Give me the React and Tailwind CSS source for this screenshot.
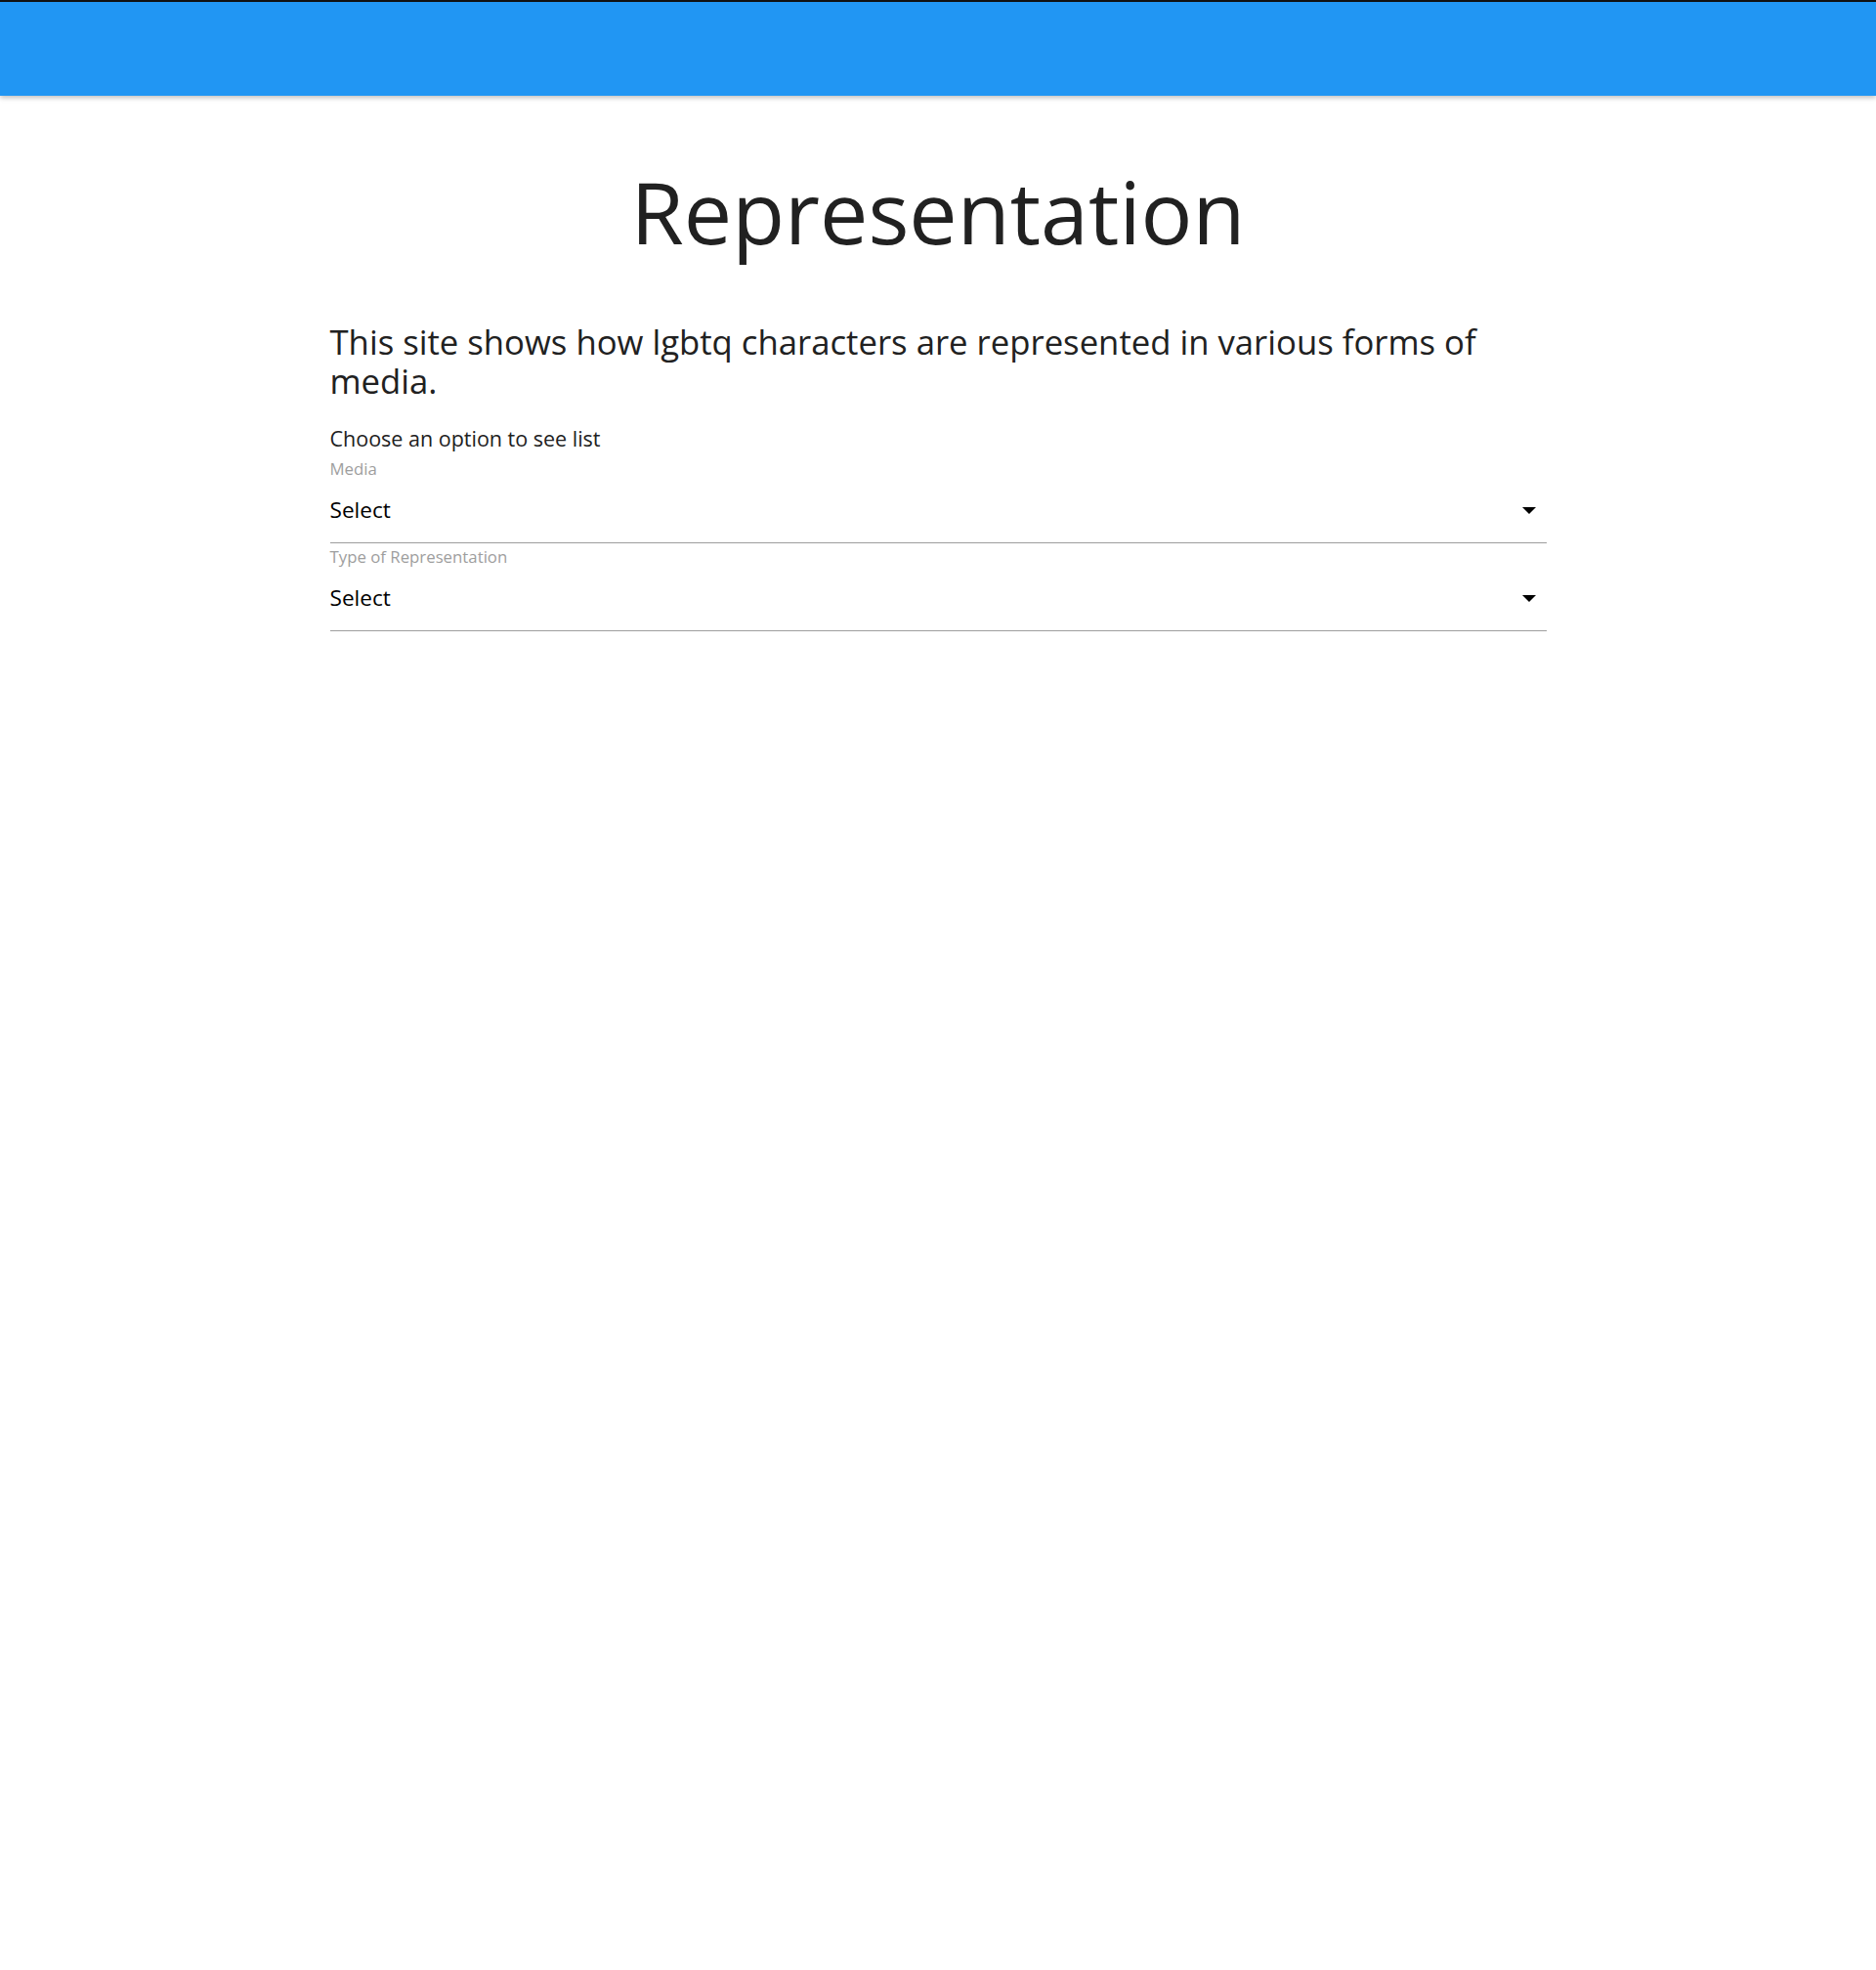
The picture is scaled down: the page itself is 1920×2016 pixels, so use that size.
export default function App() {
  const font = { fontFamily: '"Open Sans", sans-serif' };
  const Field = ({ label, first }) => (
    <div className={first ? "" : "mt-[4px]"}>
      <div className="text-[16.8px] leading-[20px] text-[#9e9e9e] mb-[16px]">{label}</div>
      <div className="relative h-[50px] border-b border-[#9e9e9e] cursor-pointer">
        <div className="text-[22.6px] leading-[32px] text-black">Select</div>
        <div className="absolute right-[11px] top-[13px] w-0 h-0 border-l-[7.5px] border-r-[7.5px] border-t-[7.5px] border-l-transparent border-r-transparent border-t-black" />
      </div>
    </div>
  );
  return (
    <div className="min-h-[2016px] bg-white" style={font}>
      <header className="h-[98px] border-t-2 border-[#111] bg-[#2196F3] shadow-[0_2px_5px_rgba(0,0,0,0.26)]" />
      <main className="w-[1245px] mx-auto text-[#212121]">
        <h1 className="mt-[66px] text-center text-[88px] leading-[1.2] font-normal">Representation</h1>
        <p className="mt-[60px] text-[34.7px] leading-[40px]">This site shows how lgbtq characters are represented in various forms of media.</p>
        <p className="mt-[25.6px] text-[21.5px] leading-[28px]">Choose an option to see list</p>
        <div className="mt-[7px]">
          <Field label="Media" first />
          <Field label="Type of Representation" />
        </div>
      </main>
    </div>
  );
}
